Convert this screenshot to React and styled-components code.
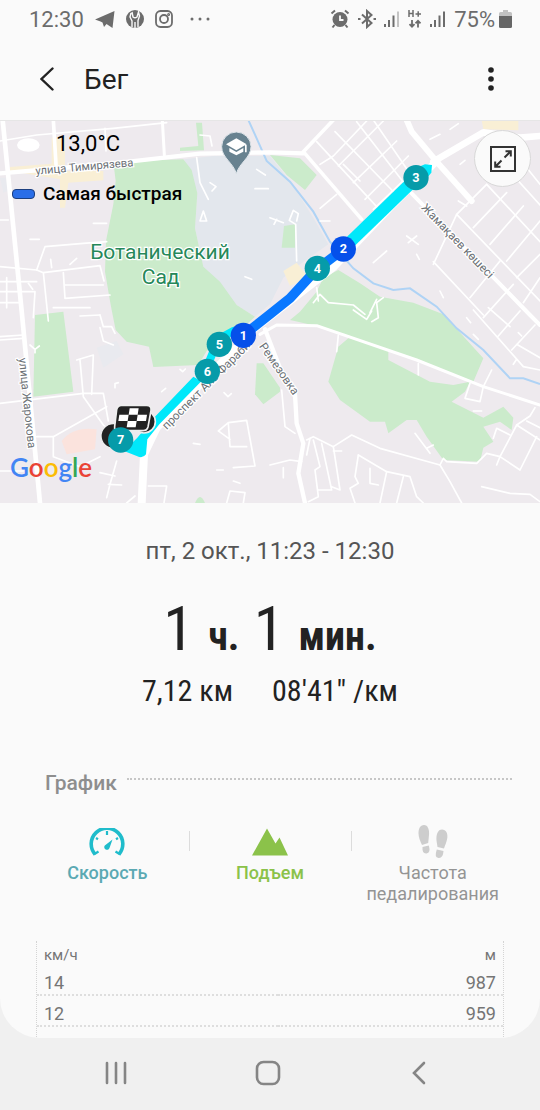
import React, { useState } from 'react'
import styled, { createGlobalStyle } from 'styled-components'

const minorRoads = [
  // north west blocks
  'M0 60 L110 42 L340 22 L500 5',
  'M0 297 H25 M0 437 L110 447 L135 377 L250 367 L320 362',
  'M110 447 L130 455 L300 434 L312 480 M130 455 L145 600 M190 455 L195 532 L330 522',
  'M0 482 H110 M0 512 H105 L100 590 M195 492 H310 M20 470 V560 M0 545 H60',
  'M85 487 L98 505 M152 415 L155 440 M230 412 L210 430 M315 22 L318 90',
  'M590 110 L600 185 L625 235 M600 300 L610 270 L620 300 Z M630 185 L648 197 L636 210',
  'M770 145 L796 162 M765 203 H805 M735 467 L755 475 M600 42 L630 45 L636 75',
  'M280 307 H320 M90 355 H118',
  // south west blocks
  'M0 647 L70 642 M0 657 L70 652 M0 847 L250 817 L310 817 L325 900',
  'M240 717 L250 827 L310 912 L345 945 M230 717 L280 702 L275 820 M160 947 L320 857',
  'M110 947 H160 V1007 L240 1037 L300 1007 M300 582 L310 617 L335 617 L345 637',
  'M240 585 L300 582 M300 620 L310 660 L340 672 M0 1050 H70 M160 560 H270',
  'M350 1020 L330 1090 L320 1130 M300 1055 L345 1065 M325 1090 L365 1092',
  'M655 930 L685 905 L740 898 L765 1035 L700 1040 M685 907 L690 977 L740 977 M658 932 L690 955',
  'M445 1095 H500 L492 1146 M680 1146 L690 1110 L735 1115 L730 1146 M405 1125 L380 1146',
  'M90 672 L105 685 L118 675 M105 685 V695 M540 745 L548 752 L556 744 M672 815 L684 827 L694 818',
  'M485 812 L497 802 M345 800 L345 788 L355 785 M580 967 L600 970 M650 1047 H670 M700 1080 L720 1087',
  // north east grid
  'M950 62 L1130 257 M1005 32 L1190 222 M1070 2 L1215 190 M1120 -3 L1235 165',
  'M1100 0 L1000 105 L960 130 M1150 0 L1015 135 M1190 60 L1060 185 M1225 105 L1095 235 M1240 150 L1120 265',
  'M1010 220 L960 262 M1030 130 L1080 180 M1290 55 L1320 40 M1350 25 L1375 8 M1380 130 L1395 118',
  'M1460 190 L1620 362 M1510 130 L1620 252 M1540 90 L1620 190 M1370 280 L1620 540 M1300 422 L1450 582',
  'M1460 190 L1370 280 L1300 430 M1520 215 L1420 320 M1570 255 L1470 370 M1620 300 L1520 420 M1620 400 L1550 470',
  'M1500 420 L1410 530 M1540 490 L1450 590 M1620 470 L1570 545 M1590 120 L1540 180 M1375 240 L1400 255',
  'M1220 345 L1255 370 M1225 365 L1250 345 M1120 425 L1160 390 M960 300 H990 M1320 510 L1330 530 M1250 400 L1258 415',
  // campus
  'M890 420 L887 310 L868 298 L880 268 L895 278 L890 300 M810 290 L850 305 M830 295 L822 310',
  'M940 545 L960 520 L985 545 L1060 552 L1095 580 M950 500 L955 540 M1060 567 L1100 595 L1115 570 M1115 602 L1135 590 L1130 545 L1150 530 M1110 575 L1130 535',
  // south east
  'M1420 567 L1570 737 L1620 747 M1465 560 L1530 617 M1495 645 L1560 570 M1535 687 L1605 612 M1550 670 L1620 710 M1540 730 L1550 715',
  'M1400 590 L1412 605 M1420 640 L1435 655 M1555 635 L1565 645',
  'M920 957 L940 947 L1000 977 L1055 942 L1140 982 L1320 1032 L1350 1082 L1385 1146',
  'M920 1002 L930 952 M940 957 L960 1037 L945 1047 L955 1127 L925 1142 M965 967 L995 1107 L955 1107',
  'M1000 977 L1020 1107 L995 1097 M1000 990 H1025 M1075 1002 L1160 1052 L1140 1146',
  'M1075 1002 L1065 1067 L1075 1087 L1050 1102 L1065 1146 M1160 1052 L1230 1067 L1250 1127 L1270 1146',
  'M1210 1067 L1190 1146 M1110 1042 V1087 L1135 1092 M1245 937 L1290 997 M1300 972 L1280 982',
  'M1320 1032 L1330 1012 L1340 1022 L1430 1027 L1460 997 L1500 1007 L1550 912 L1620 957',
  'M1480 952 L1490 922 L1530 942 M1500 1007 L1490 1032 M1500 1007 L1560 1047 L1610 947 M1580 900 L1620 920 M1550 912 L1590 885 L1605 860',
  'M1445 1097 L1530 1117 L1590 1120 L1620 1142 M810 1032 L870 1017 L905 1022 M845 807 L855 917 L885 937',
  'M1015 642 L1010 692 M1255 727 V762 M1410 787 L1395 832 L1440 842 L1450 797 L1475 747 M850 1040 V1070 M1420 870 H1445',
]

const mainRoads = [
  { d: 'M8 -3 L65 570 L120 1146', w: 14 },
  { d: 'M0 157 L120 147 L340 127 L600 98 L810 94 L910 97', w: 13 },
  { d: 'M1000 -3 L910 92 L1085 295', w: 11 },
  { d: 'M160 -3 L168 130', w: 11 },
  { d: 'M487 -3 L493 102', w: 9 },
  { d: 'M1220 -3 L1235 32 L1310 122 L1415 240', w: 18 },
  { d: 'M1620 45 L1560 50 L1450 34 L1300 122', w: 20 },
  { d: 'M1310 120 L1180 250 L1000 440 L730 650', w: 22 },
  { d: 'M1235 217 L1590 582 L1620 612', w: 12 },
  { d: 'M425 1146 L432 1000 L470 920 L720 670', w: 24 },
  { d: 'M780 640 L830 612 L950 614 L1250 717 L1450 797 L1620 852', w: 9 },
  { d: 'M795 625 L850 767 L885 820 L890 907 L910 967 L895 1057 L915 1146', w: 13 },
]

const parks = [
  'M340 122 L550 115 L575 147 L592 217 L585 322 L610 437 L660 482 L710 552 L765 587 L740 610 L700 640 L620 690 L595 732 L460 738 L447 677 L380 662 L347 627 L335 567 L330 540 L315 452 L318 360 L340 250 L347 180Z',
  'M105 582 L190 572 L220 812 L100 827Z',
  'M810 102 L900 112 L950 162 L915 207 L860 162Z',
  'M852 315 L885 310 V380 L845 380Z',
  'M588 5 H606 L612 88 L540 90 V80 L595 75Z',
  'M1015 447 L1080 487 L1140 527 L1240 545 L1330 580 L1450 712 L1420 782 L1250 717 L960 617 L870 597 L900 572 L950 512 L970 470Z',
  'M1015 677 L1050 647 L1165 690 V717 L1290 782 L1360 792 L1410 782 L1395 812 L1355 842 L1450 890 L1510 857 L1540 890 L1535 927 L1500 902 L1450 917 L1480 962 L1450 980 L1440 1022 L1330 1017 L1280 947 L1250 897 H1220 L1165 937 L1155 902 H1110 L1020 837 L985 782Z',
  'M770 727 L790 727 L840 800 V812 L790 850 L765 820Z',
  'M585 1146 Q600 1110 615 1146Z',
]

const points = [
  { n: 7, x: 362, y: 957 },
  { n: 6, x: 622, y: 751 },
  { n: 5, x: 658, y: 670 },
  { n: 4, x: 952, y: 442 },
  { n: 3, x: 1248, y: 170 },
  { n: 2, x: 1030, y: 384, fast: true },
  { n: 1, x: 730, y: 643, fast: true },
]

const TrackMap = () => (
  <MapSvg viewBox='0 0 1620 1146' preserveAspectRatio='xMidYMid slice'>
    <rect width='1620' height='1146' fill='#eeeaee' />
    <path d='M552 115 L640 105 L810 105 L870 180 L940 290 L985 370 L900 430 L850 470 L810 550 L765 587 L710 552 L610 437 L585 322 L592 217Z' fill='#e3e7ed' />
    <path d='M0 170 H18 L25 210 L10 215Z M290 680 L350 660 L370 700 L310 740Z' fill='#e9eaef' />
    <path d='M155 50 H195 V150 L310 150 V178 L205 185 L195 260 H180 V175 L90 160 L30 150 V138 L155 128Z M1445 -3 H1555 V28 L1450 25Z M850 450 L890 425 L925 470 L870 495Z' fill='#f9efd5' />
    <path d='M185 960 Q220 915 290 925 L285 985 L200 1000Z' fill='#fbe3dd' />
    {parks.map(d => (
      <path key={d} d={d} fill='#cbebcb' />
    ))}
    <path d='M745 -3 L770 52 L800 120 L870 182 L940 272 L990 362 L1060 442 L1120 487 L1180 507 L1230 502 L1310 557 L1370 622 L1450 687 L1530 772 L1570 772 L1620 789' fill='none' stroke='#afd3f5' strokeWidth='6' />
    <ellipse cx='85' cy='72' rx='34' ry='20' fill='#fff' />
    <g fill='none' stroke='#fff' strokeLinejoin='round' strokeLinecap='round'>
      {minorRoads.map(d => (
        <path key={d} d={d} strokeWidth='5' />
      ))}
      {mainRoads.map(r => (
        <path key={r.d} d={r.d} strokeWidth={r.w} />
      ))}
    </g>

    <g fill='#6b7075' stroke='#fff' strokeWidth='7' paintOrder='stroke' fontSize='35'>
      <text transform='translate(107 161) rotate(-5)' fontSize='34'>улица Тимирязева</text>
      <text transform='translate(1262 262) rotate(46)'>Жамақаев көшесі</text>
      <text transform='translate(56 712) rotate(84)'>улица Жарокова</text>
      <text transform='translate(500 928) rotate(-45)'>проспект Аль-Фараби</text>
      <text transform='translate(776 676) rotate(55)'>Ремезовка</text>
    </g>
    <g fill='#26885a' stroke='#fff' strokeWidth='7' paintOrder='stroke' fontSize='63' textAnchor='middle'>
      <text x='480' y='414'>Ботанический</text>
      <text x='482' y='490'>Сад</text>
    </g>

    <g fill='none' strokeLinejoin='round' strokeLinecap='round'>
      <path d='M1258 162 L1035 378' stroke='#00e8fa' strokeWidth='36' strokeLinecap='butt' />
      <path d='M1030 385 L950 445 L870 532 L810 580 L730 643' stroke='#0a78ff' strokeWidth='29' />
      <path d='M700 630 L655 655 L622 735' stroke='#00e8fa' strokeWidth='24' />
    </g>
    <path d='M1250 140 L1275 130 L1296 132 L1294 155 L1280 172Z' fill='#00e8fa' />
    <path d='M580 767 L604 781 L478 910 L442 955 L438 1000 Q428 1014 412 1006 L372 990 L412 950 L462 890Z' fill='#00e8fa' />

    <circle cx='432' cy='902' r='34' fill='#222' stroke='#eee' strokeWidth='5' />
    <circle cx='340' cy='945' r='37' fill='#222' stroke='#eee' strokeWidth='4' />
    <path d='M364 853 H440 Q455 853 453 868 L444 918 Q441 929 430 929 H355 Q342 929 344 916 L350 866 Q353 853 364 853Z' fill='#222' stroke='#eee' strokeWidth='5' />
    <path d='M389 862 H416 L413 881 H386Z M358 881 H386 L383 900 H355Z M413 881 H441 L438 900 H410Z M383 900 H410 L407 919 H380Z' fill='#fff' />

    {points.map(p => (
      <g key={p.n}>
        <circle cx={p.x} cy={p.y} r='38' fill={p.fast ? '#0550ea' : '#069ba9'} />
        <text x={p.x} y={p.y + 13} fill='#fff' fontSize='38' fontWeight='700' textAnchor='middle'>
          {p.n}
        </text>
      </g>
    ))}

    {/* university pin */}
    <path d='M709 158 C700 125 665 110 665 77 A44 44 0 0 1 753 77 C753 110 718 125 709 158Z' fill='#688290' stroke='#dfe5ea' strokeWidth='3' />
    <path d='M709 52 L740 70 L709 88 L678 70Z' fill='#fff' />
    <path d='M688 81 L709 93 L730 81 V92 L709 103 L688 92Z M735 72 H740 V94 H735Z' fill='#fff' />
  </MapSvg>
)

const SignalIcon = ({ weak }) => (
  <svg width='16' height='18' viewBox='0 0 16 18' fill='#6c6c6c'>
    <path d='M0 14h2v3H0zM4 10h2v7H4zM8.500 5.500h2V17h-2z' />
    <path d='M13 1.500h2V17h-2z' fill={weak ? '#c4c4c4' : '#6c6c6c'} />
  </svg>
)

const StatusIcons = () => (
  <StatusGroup $gap={8}>
    <svg width='20' height='20' viewBox='0 0 20 20'>
      <circle cx='10' cy='10.500' r='7.500' fill='#6c6c6c' />
      <path d='M1.500 4.500 5 1.500M18.500 4.500 15 1.500M4.500 16 2.500 18.500M15.500 16l2 2.500' stroke='#6c6c6c' strokeWidth='2' />
      <path d='M10 6.500V11h3.500' stroke='#fafafa' strokeWidth='1.800' fill='none' />
    </svg>
    <svg width='18' height='20' viewBox='0 0 18 20' fill='none' stroke='#6c6c6c' strokeWidth='2'>
      <path d='M4 5.500 13.500 14 9 18V2l4.500 4L4 14.500' />
      <path d='M0 10h2.500M15.500 10H18' />
    </svg>
    <SignalIcon weak />
    <svg width='14' height='20' viewBox='0 0 14 20' fill='none' stroke='#6c6c6c' strokeWidth='1.500'>
      <path d='M1 1v7M5 1v7M1 4.500h4M7.500 5H13M10.200 2.300v5.400' />
      <path d='M4 11v6.500M1.500 15.200 4 17.800l2.500-2.600M10 18.500V12M7.500 14.300 10 11.700l2.500 2.600' strokeWidth='1.800' />
    </svg>
    <SignalIcon />
    <BatteryText>75%</BatteryText>
    <svg width='13' height='18' viewBox='0 0 13 18'>
      <path d='M4 0h5v2h2.500q1.500 0 1.500 1.500V7H0V3.500Q0 2 1.500 2H4z' fill='#c2c2c2' />
      <path d='M0 6h13v10.500q0 1.500-1.500 1.500h-10Q0 18 0 16.500z' fill='#666' />
    </svg>
  </StatusGroup>
)

const SpeedIcon = () => (
  <svg width='36' height='28' viewBox='0 0 36 28' fill='none'>
    <path d='M6.200 26.500A15.800 15.800 0 1 1 29.800 26.500' stroke='#1fbccb' strokeWidth='3.600' />
    <path d='M18 3v4M7 10l2 1.200M29 10l-2 1.200M5.500 26l4-2.500M30.500 26l-4-2.500' stroke='#1fbccb' strokeWidth='2.200' />
    <path d='M23.500 11.500 20.500 20a2.700 2.700 0 1 1-4.700-2.500z' fill='#1fbccb' />
  </svg>
)

const HillIcon = () => (
  <svg width='38' height='28' viewBox='0 0 38 28'>
    <path d='M1 27.500 16 .5l8.500 15 4-6 8.500 18z' fill='#8bc24a' />
  </svg>
)

const StepsIcon = () => (
  <svg width='30' height='34' viewBox='0 0 30 34' fill='#cdcdcd'>
    <path d='M6 0C10 0 11.500 5 11 10L10.200 18 4 20C2 16 .5 12 .5 8S2 0 6 0Z' />
    <path d='M4.500 22 10.800 20.500Q13 28 8.500 28.500T4.500 22Z' />
    <path d='M24 4.500C28 4.500 30 8.500 29.300 13S27 20 26 23.500L19.500 22C19 18 18 15 18.500 11.500S20.500 4.500 24 4.500Z' />
    <path d='M18.800 24.500 25.500 26Q25 33.500 20.500 33T18.800 24.500Z' />
  </svg>
)

const tabs = [
  { id: 'speed', label: 'Скорость', color: '#5ba9b3', icon: <SpeedIcon /> },
  { id: 'climb', label: 'Подъем', color: '#8bc24a', icon: <HillIcon /> },
  { id: 'cadence', label: 'Частота педалирования', color: '#949494', icon: <StepsIcon /> },
]

const rows = [
  { speed: 14, height: 987 },
  { speed: 12, height: 959 },
]

const App = () => {
  const [active, setActive] = useState(['speed', 'climb'])
  const toggle = id =>
    setActive(active.includes(id) ? active.filter(el => el !== id) : [...active, id])

  return (
    <Page>
      <GlobalStyle />
      <Screen>
        <StatusBar>
          <StatusGroup $gap={11}>
            <span>12:30</span>
            <svg width='20' height='18' viewBox='0 0 20 18' fill='#6c6c6c'>
              <path d='M0 9.500 19.500 1 17.500 18 11.500 14 9 17 7.500 12.500 5.500 11.500z' />
            </svg>
            <svg width='18' height='18' viewBox='0 0 18 18'>
              <circle cx='9' cy='9' r='9' fill='#6c6c6c' />
              <path d='M6 2 7 7Q9 8.500 11 7L12.500 2 13.500 6 12 10.500V17M6 17V11L4 7 5 3M9 12V18' stroke='#fafafa' strokeWidth='1.400' fill='none' />
            </svg>
            <svg width='18' height='18' viewBox='0 0 18 18' fill='none' stroke='#6c6c6c' strokeWidth='1.800'>
              <rect x='1' y='1' width='16' height='16' rx='4.500' />
              <circle cx='9' cy='9' r='4' />
              <circle cx='13.600' cy='4.400' r='.6' />
            </svg>
            <MoreDots width='20' height='4' viewBox='0 0 20 4' fill='#6c6c6c'>
              <circle cx='2' cy='2' r='1.500' />
              <circle cx='10' cy='2' r='1.500' />
              <circle cx='18' cy='2' r='1.500' />
            </MoreDots>
          </StatusGroup>
          <StatusIcons />
        </StatusBar>

        <Header>
          <IconButton aria-label='Назад'>
            <svg width='14' height='24' viewBox='0 0 14 24' fill='none' stroke='#222' strokeWidth='2.400' strokeLinecap='round'>
              <path d='M12.500 1.500 1.500 12l11 10.500' />
            </svg>
          </IconButton>
          <h1>Бег</h1>
          <IconButton aria-label='Ещё'>
            <svg width='6' height='24' viewBox='0 0 6 24' fill='#222'>
              <circle cx='3' cy='3' r='2.800' />
              <circle cx='3' cy='12' r='2.800' />
              <circle cx='3' cy='21' r='2.800' />
            </svg>
          </IconButton>
        </Header>

        <MapBox>
          <TrackMap />
          <MapInfo>
            <Temperature>13,0°C</Temperature>
            <Legend>Самая быстрая</Legend>
          </MapInfo>
          <ExpandButton aria-label='Развернуть карту'>
            <svg width='26' height='26' viewBox='0 0 26 26' fill='none' stroke='#333' strokeWidth='2'>
              <rect x='1' y='1' width='24' height='24' />
              <path d='M14.500 11.500 20.500 5.500M15.500 5.200h5.300v5.300M11.500 14.500l-6 6M5.200 15.500v5.300h5.300' />
            </svg>
          </ExpandButton>
          <GoogleLogo>
            <Letter $color='#4285f4'>G</Letter>
            <Letter $color='#ea4335'>o</Letter>
            <Letter $color='#fbbc05'>o</Letter>
            <Letter $color='#4285f4'>g</Letter>
            <Letter $color='#34a853'>l</Letter>
            <Letter $color='#ea4335'>e</Letter>
          </GoogleLogo>
        </MapBox>

        <Summary>
          <Period>пт, 2 окт., 11:23 - 12:30</Period>
          <Duration>
            1 <b>ч.</b> 1 <b>мин.</b>
          </Duration>
          <Totals>
            <span>7,12 км</span>
            <span>08'41" /км</span>
          </Totals>
        </Summary>

        <SectionTitle>
          <h2>График</h2>
        </SectionTitle>

        <Tabs>
          {tabs.map(tab => (
            <Tab
              key={tab.id}
              $color={tab.color}
              $on={active.includes(tab.id)}
              aria-pressed={active.includes(tab.id)}
              onClick={() => toggle(tab.id)}>
              <TabIcon>{tab.icon}</TabIcon>
              {tab.label}
            </Tab>
          ))}
        </Tabs>

        <Chart>
          <thead>
            <tr>
              <th>км/ч</th>
              <th>м</th>
            </tr>
          </thead>
          <tbody>
            {rows.map(row => (
              <tr key={row.speed}>
                <td>{row.speed}</td>
                <td>{row.height}</td>
              </tr>
            ))}
          </tbody>
        </Chart>
      </Screen>

      <NavBar>
        <IconButton aria-label='Последние'>
          <svg width='22' height='24' viewBox='0 0 22 24' stroke='#858585' strokeWidth='2.600' strokeLinecap='round'>
            <path d='M2 2v20M11 2v20M20 2v20' />
          </svg>
        </IconButton>
        <IconButton aria-label='Домой'>
          <svg width='26' height='26' viewBox='0 0 26 26' fill='none' stroke='#858585' strokeWidth='2.600'>
            <rect x='2' y='2' width='22' height='22' rx='6.500' />
          </svg>
        </IconButton>
        <IconButton aria-label='Назад'>
          <svg width='14' height='24' viewBox='0 0 14 24' fill='none' stroke='#858585' strokeWidth='2.600' strokeLinecap='round'>
            <path d='M12 2 2 12l10 10' />
          </svg>
        </IconButton>
      </NavBar>
    </Page>
  )
}

export default App

const GlobalStyle = createGlobalStyle`
  * {
    box-sizing: border-box;
  }
  body {
    margin: 0;
    background: #f0f0f0;
    font-family: Roboto, 'Noto Sans', sans-serif;
  }
  h1, h2, p {
    margin: 0;
  }
  svg {
    display: block;
    flex-shrink: 0;
  }
  button {
    padding: 0;
    border: 0;
    background: none;
    font: inherit;
    cursor: pointer;
  }
`

const Page = styled.div`
  min-height: 100vh;
  display: flex;
  flex-direction: column;
  background: #f0f0f0;
`

const Screen = styled.main`
  flex: 1;
  display: flex;
  flex-direction: column;
  background: #fafafa;
  border-radius: 0 0 40px 40px;
`

const StatusBar = styled.div`
  height: 38px;
  padding: 0 28px 0 29px;
  display: flex;
  align-items: center;
  justify-content: space-between;
  color: #6c6c6c;
  font-size: 22px;
`

const StatusGroup = styled.div`
  display: flex;
  align-items: center;
  gap: ${props => props.$gap}px;
`

const BatteryText = styled.span`
  margin-right: -4px;
`

const MoreDots = styled.svg`
  margin-left: 6px;
`

const Header = styled.header`
  height: 83px;
  padding: 0 40px 0 24px;
  display: flex;
  align-items: center;
  border-bottom: 1px solid #e6e6e6;
  h1 {
    flex: 1;
    padding-left: 14px;
    color: #222;
    font-size: 28px;
    font-weight: 400;
  }
`

const IconButton = styled.button`
  min-width: 32px;
  height: 48px;
  display: flex;
  align-items: center;
  justify-content: center;
  ${Header} & {
    min-width: 46px;
  }
  ${Header} &:last-child {
    min-width: 18px;
  }
`

const MapBox = styled.section`
  position: relative;
  height: 382px;
  overflow: hidden;
`

const MapSvg = styled.svg`
  width: 100%;
  height: 100%;
`

const MapInfo = styled.div`
  position: absolute;
  top: 8px;
  left: 12px;
  color: #000;
`

const Temperature = styled.p`
  padding-left: 44px;
  font-size: 22px;
  line-height: 30px;
`

const Legend = styled.p`
  display: flex;
  align-items: center;
  gap: 8px;
  margin-top: 20px;
  font-size: 19px;
  font-weight: 500;
  line-height: 30px;
  &::before {
    content: '';
    width: 21px;
    height: 8px;
    border: 1px solid #1c3f80;
    border-radius: 4px;
    background: #2a6ee8;
  }
`

const ExpandButton = styled.button`
  position: absolute;
  top: 9px;
  right: 9px;
  width: 57px;
  height: 57px;
  display: flex;
  align-items: center;
  justify-content: center;
  && {
    border: 1px solid #d8d8d8;
    border-radius: 50%;
    background: #fafafa;
  }
`

const GoogleLogo = styled.div`
  position: absolute;
  left: 10px;
  bottom: 20px;
  font-family: Lato, sans-serif;
  font-size: 26px;
  font-weight: 600;
  line-height: 32px;
`

const Letter = styled.span`
  color: ${props => props.$color};
`

const Summary = styled.section`
  padding-top: 32px;
  text-align: center;
  color: #222;
`

const Period = styled.p`
  color: #555;
  font-size: 24px;
  line-height: 32px;
`

const Duration = styled.p`
  margin-top: 24px;
  font-family: 'Roboto Condensed', Roboto, sans-serif;
  font-size: 62px;
  line-height: 76px;
  b {
    font-size: 40px;
  }
`

const Totals = styled.div`
  display: flex;
  justify-content: center;
  gap: 39px;
  font-family: 'Roboto Condensed', Roboto, sans-serif;
  font-size: 30px;
  line-height: 32px;
`

const SectionTitle = styled.div`
  display: flex;
  align-items: center;
  gap: 10px;
  margin: 61px 28px 0 45px;
  h2 {
    color: #8e8e8e;
    font-size: 21px;
    font-weight: 500;
    line-height: 30px;
  }
  &::after {
    content: '';
    flex: 1;
    margin-bottom: 8px;
    border-top: 2px dotted #c6c6c6;
  }
`

const Tabs = styled.div`
  display: flex;
  align-items: flex-start;
  margin: 24px 26px 0;
`

const Tab = styled.button`
  position: relative;
  flex: 1;
  height: 82px;
  display: flex;
  flex-direction: column;
  align-items: center;
  && {
    color: ${props => props.$color};
    font-size: 18px;
    font-weight: ${props => (props.$on ? 500 : 400)};
    line-height: 21px;
  }
  &:not(:first-child)::before {
    content: '';
    position: absolute;
    top: 9px;
    left: 0;
    width: 1px;
    height: 20px;
    background: #dcdcdc;
  }
`

const TabIcon = styled.span`
  height: 40px;
  display: flex;
  align-items: center;
  justify-content: center;
`

const Chart = styled.table`
  margin: 37px 36px 0;
  border-collapse: separate;
  border-spacing: 0;
  border-left: 1px dotted #d4d4d4;
  border-right: 1px dotted #d4d4d4;
  color: #757575;
  font-size: 18px;
  th {
    height: 24px;
    padding: 4px 7px 0;
    font-size: 15px;
    font-weight: 400;
    text-align: left;
  }
  td {
    height: 31px;
    padding: 5px 7px 0;
    border-bottom: 2px dotted #dedede;
  }
  th:last-child,
  td:last-child {
    text-align: right;
  }
  tbody::after {
    content: '';
    display: table-row;
    height: 10px;
  }
`

const NavBar = styled.nav`
  height: 72px;
  padding: 0 105px 2px 100px;
  display: flex;
  align-items: center;
  justify-content: space-between;
`
